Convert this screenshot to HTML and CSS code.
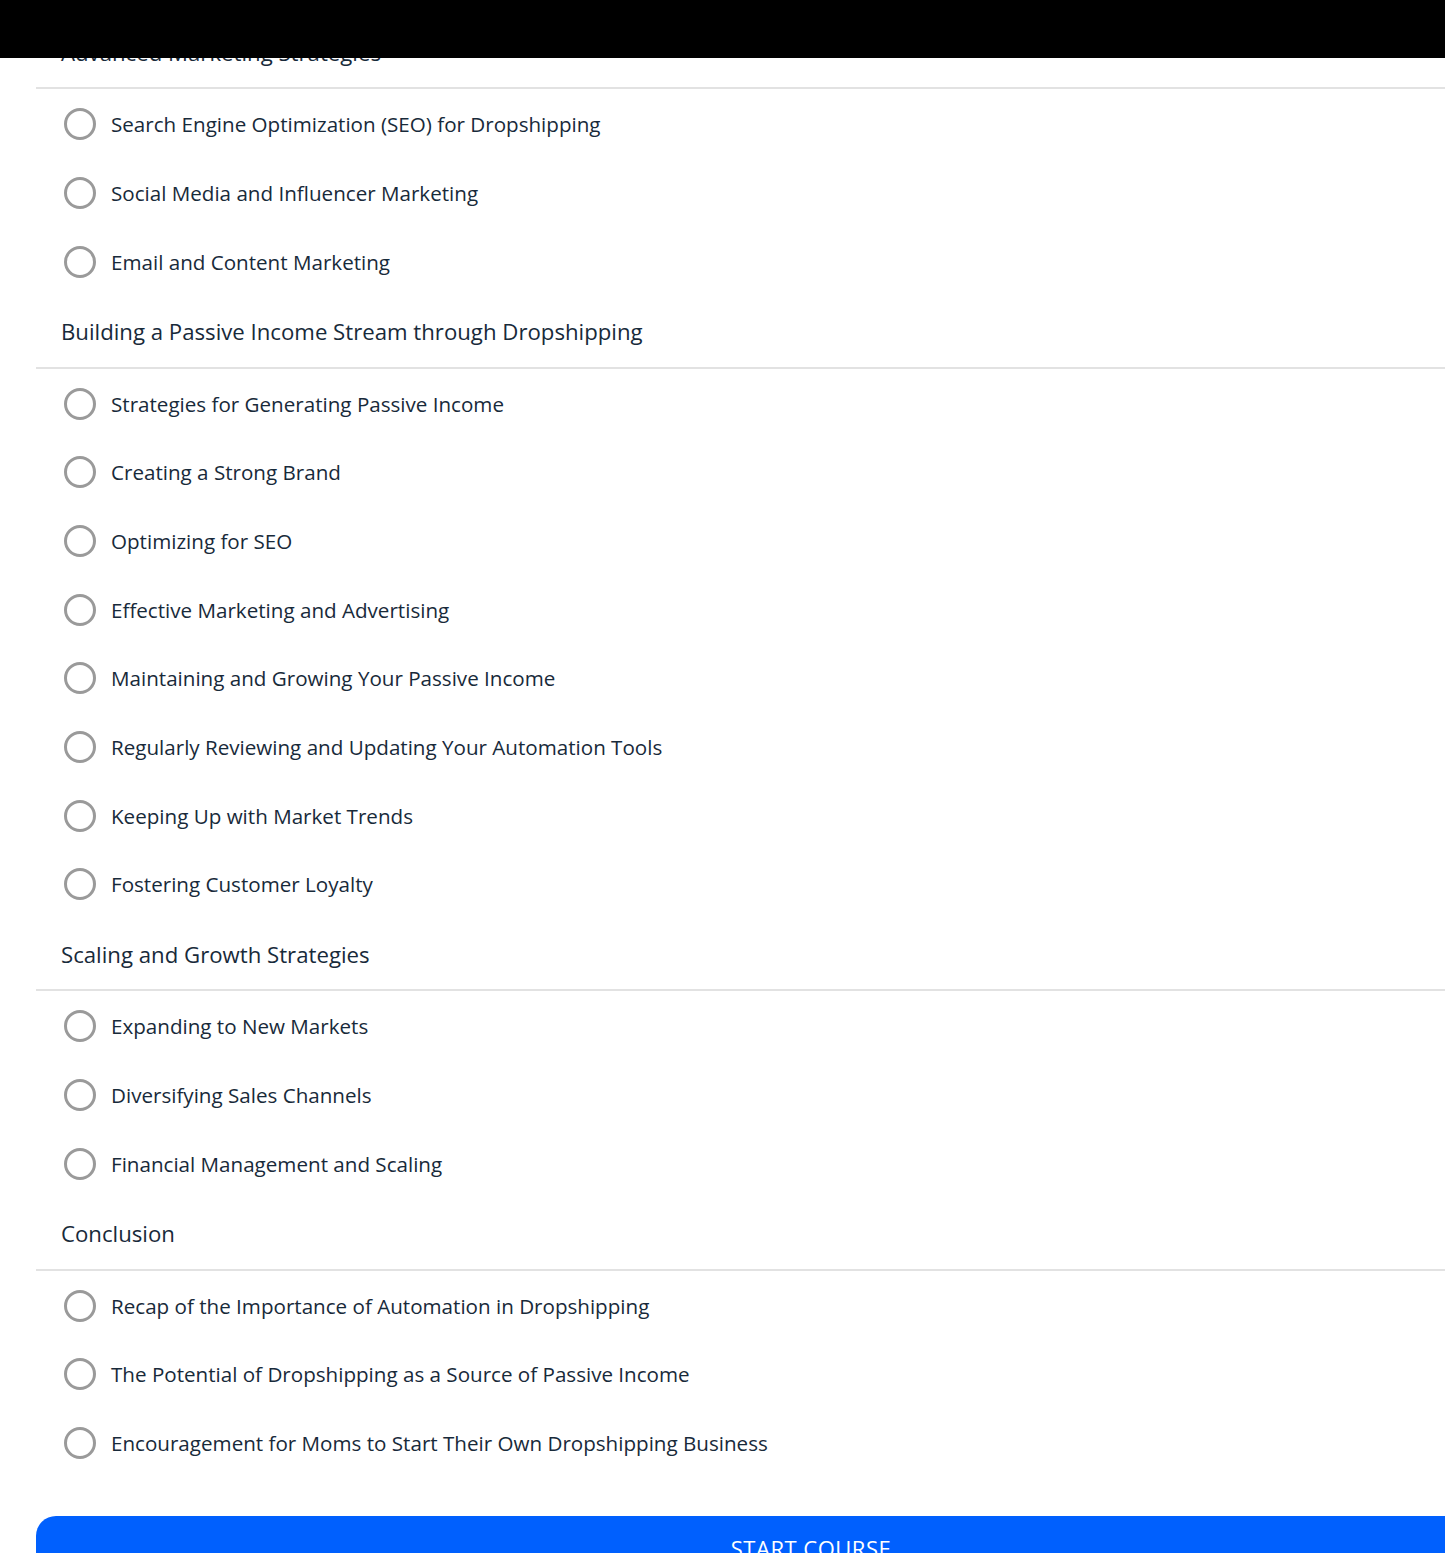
FILE: index.html
```html
<!DOCTYPE html>
<html>
<head>
<meta charset="utf-8">
<title>Course outline</title>
<link rel="stylesheet" href="styles.css">
</head>
<body>

<div class="topbar"></div>

<div id="outline">

<h3 class="section">Advanced Marketing Strategies</h3>
<ul class="lessons">
	<li><span class="check"></span>Search Engine Optimization (SEO) for Dropshipping</li>
	<li><span class="check"></span>Social Media and Influencer Marketing</li>
	<li><span class="check"></span>Email and Content Marketing</li>
</ul>

<h3 class="section">Building a Passive Income Stream through Dropshipping</h3>
<ul class="lessons">
	<li><span class="check"></span>Strategies for Generating Passive Income</li>
	<li><span class="check"></span>Creating a Strong Brand</li>
	<li><span class="check"></span>Optimizing for SEO</li>
	<li><span class="check"></span>Effective Marketing and Advertising</li>
	<li><span class="check"></span>Maintaining and Growing Your Passive Income</li>
	<li><span class="check"></span>Regularly Reviewing and Updating Your Automation Tools</li>
	<li><span class="check"></span>Keeping Up with Market Trends</li>
	<li><span class="check"></span>Fostering Customer Loyalty</li>
</ul>

<h3 class="section">Scaling and Growth Strategies</h3>
<ul class="lessons">
	<li><span class="check"></span>Expanding to New Markets</li>
	<li><span class="check"></span>Diversifying Sales Channels</li>
	<li><span class="check"></span>Financial Management and Scaling</li>
</ul>

<h3 class="section">Conclusion</h3>
<ul class="lessons">
	<li><span class="check"></span>Recap of the Importance of Automation in Dropshipping</li>
	<li><span class="check"></span>The Potential of Dropshipping as a Source of Passive Income</li>
	<li><span class="check"></span>Encouragement for Moms to Start Their Own Dropshipping Business</li>
</ul>

<a class="start" href="#">START COURSE</a>

</div>
</body>
</html>
```

FILE: styles.css
```css
html, body {overflow: hidden;}
body {margin: 0; background: #fff; font-family: "Open Sans", "Noto Sans", sans-serif; color: #182a3a;}
div.topbar {position: fixed; top: 0; left: 0; right: 0; height: 58px; background: #000; z-index: 2;}
div#outline {width: 1550px; margin: 0 0 0 36px; padding-top: 16px;}
h3.section {margin: 0; height: 73.3px; display: flex; align-items: center; padding: 1px 0 0 25px; font-size: 22.2px; font-weight: 400; border-bottom: 2px solid #e2e2e2; box-sizing: border-box;}
ul.lessons {list-style: none; margin: 0; padding: 0;}
ul.lessons li {height: 68.7px; display: flex; align-items: center; padding: 1px 0 0 28px; box-sizing: border-box; font-size: 20.6px;}
span.check {width: 26px; height: 26px; border: 3px solid #9a9a9a; border-radius: 50%; margin-right: 15px; flex: none;}
a.start {display: block; margin-top: 39px; height: 90px; padding-top: 17px; box-sizing: border-box; background: #0060fe; border-radius: 20px; color: #fff; text-align: center; text-decoration: none; font-size: 22px; letter-spacing: 0.5px;}
```
